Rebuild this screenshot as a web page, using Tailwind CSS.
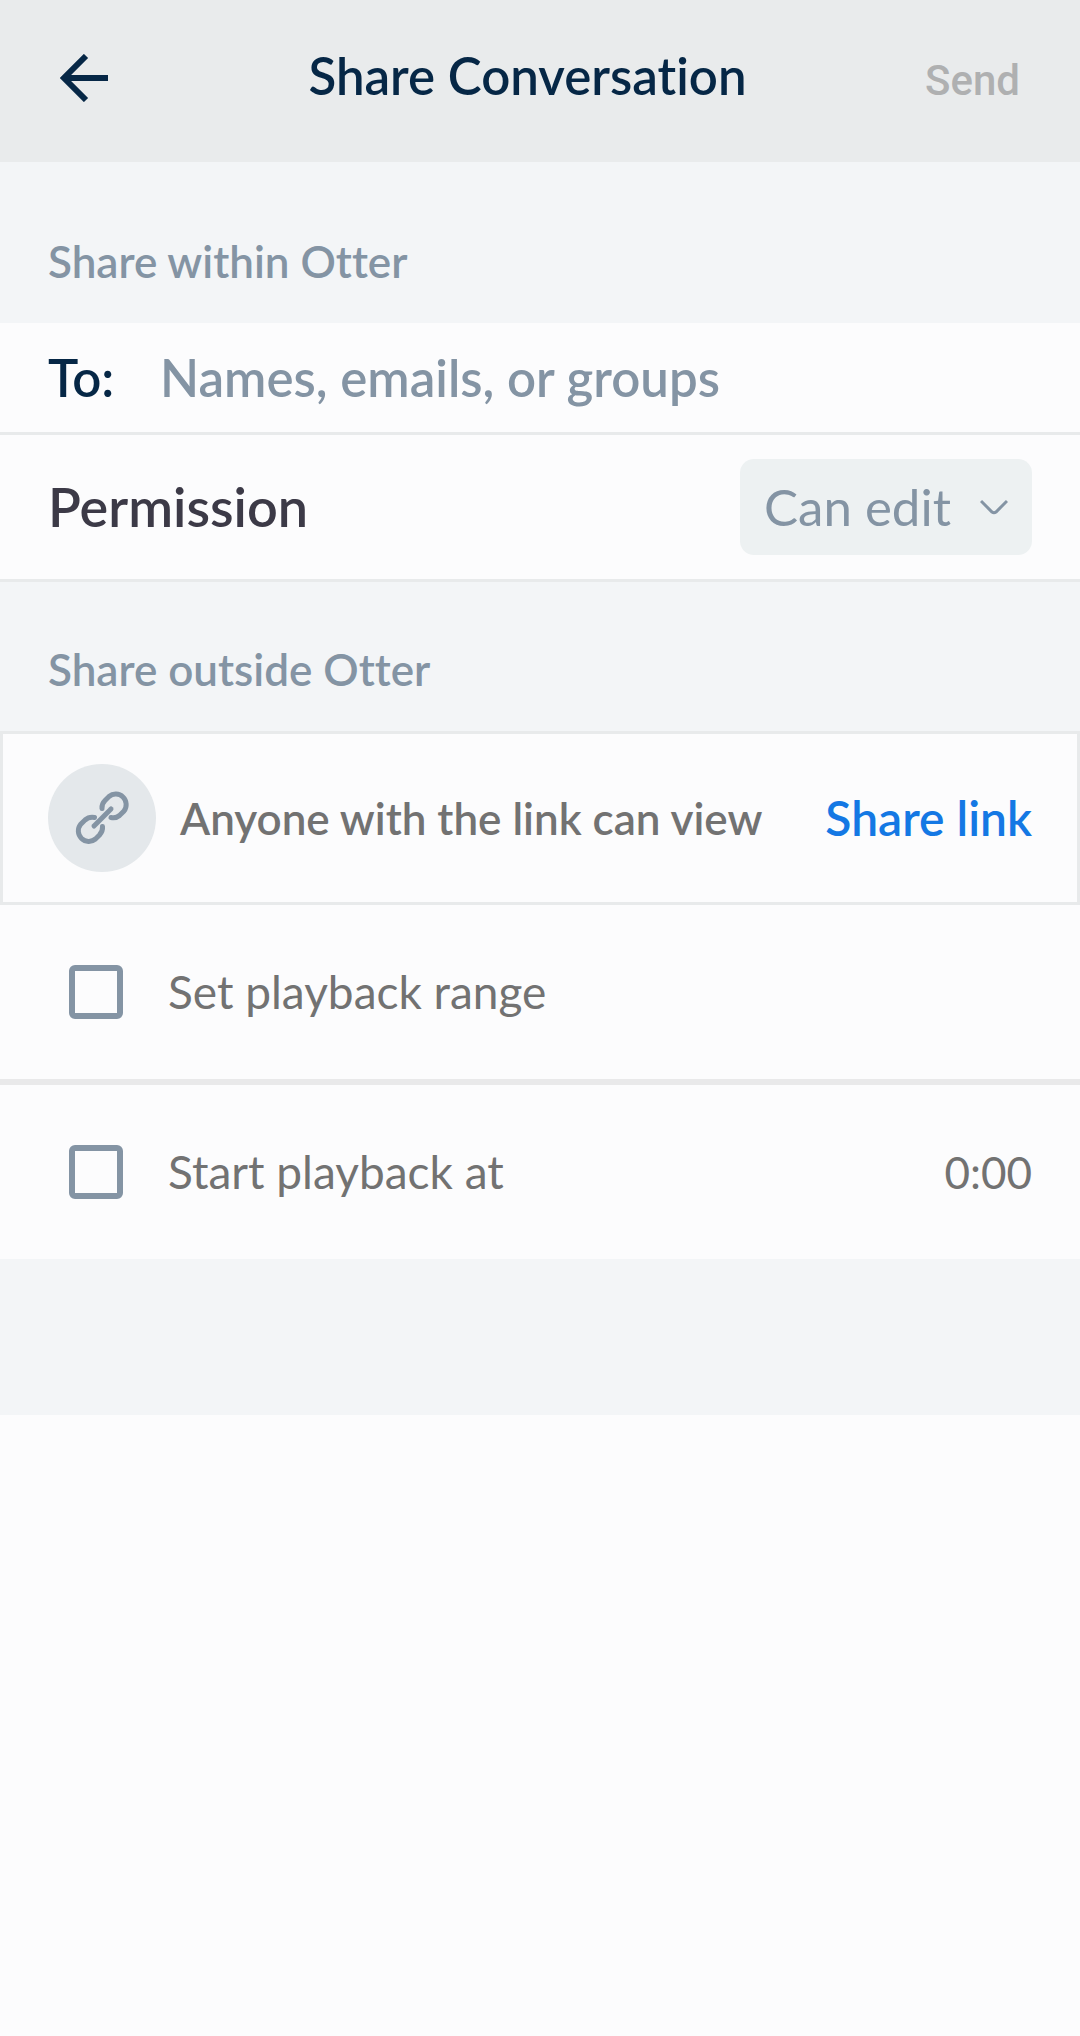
<!DOCTYPE html>
<html lang="en">
<head>
<meta charset="utf-8">
<meta name="viewport" content="width=device-width, initial-scale=1">
<title>Share Conversation</title>
<script src="https://cdn.jsdelivr.net/npm/@tailwindcss/browser@4"></script>
</head>
<body class="min-h-screen bg-[#fcfcfd] font-['Lato','Open_Sans',sans-serif] text-[#727272] [font-variant-ligatures:none]">
  <header class="flex h-[162px] items-center bg-[#e9ebec] px-[60px] pb-1.5">
    <button type="button" aria-label="Back" class="flex w-[70px] shrink-0 text-[#062746]">
      <svg class="h-12 w-12" viewBox="0 0 48 48" fill="none" stroke="currentColor" stroke-width="6" aria-hidden="true"><path d="M48 24H5M26 2 4 24l22 22"/></svg>
    </button>
    <div class="flex flex-1 items-baseline pb-1">
      <h1 class="flex-1 text-center text-[51px] leading-[60px] font-semibold text-[#062746]">Share Conversation</h1>
      <button type="button" disabled class="font-['Roboto',sans-serif] text-[42px] leading-[52px] font-medium text-[#afb0b1]">Send</button>
    </div>
  </header>

  <main>
    <section class="bg-[#f3f5f7]">
      <h2 class="px-12 pt-[73px] pb-9 text-[44px] leading-[52px] font-semibold text-[#8494a4]">Share within Otter</h2>
      <div class="flex h-28 items-center border-b-3 border-[#e8eaeb] bg-[#fcfcfd] px-12">
        <label for="to" class="w-[112px] shrink-0 text-[51px] leading-[60px] font-semibold text-[#062746]">To:</label>
        <input id="to" type="text" placeholder="Names, emails, or groups" class="min-w-0 flex-1 bg-transparent text-[51px] leading-[60px] font-semibold text-[#062746] outline-none placeholder:text-[#8494a4]">
      </div>
      <div class="flex h-[147px] items-center justify-between border-b-3 border-[#e8eaeb] bg-[#fcfcfd] px-12">
        <label for="permission" class="text-[54px] leading-[60px] font-semibold text-[#3c3a47]">Permission</label>
        <div class="relative">
          <select id="permission" class="h-24 w-[292px] appearance-none rounded-[14px] bg-[#edf1f2] pl-6 text-[51px] leading-[60px] text-[#8494a4]">
            <option>Can edit</option>
            <option>Can view</option>
          </select>
          <svg class="pointer-events-none absolute top-10 right-6 h-4 w-7" viewBox="0 0 28 16" fill="none" stroke="#8494a4" stroke-width="3" aria-hidden="true"><path d="m1 2 11 11q2 1.500 4 0L27 2"/></svg>
        </div>
      </div>
    </section>

    <section class="bg-[#f3f5f7] pb-39">
      <h2 class="px-12 pt-[61px] pb-9 text-[44px] leading-[52px] font-semibold text-[#8494a4]">Share outside Otter</h2>
      <div class="flex h-[174px] items-center border-3 border-[#e8eaeb] bg-[#fcfcfd] px-[45px]">
        <span class="flex size-[108px] shrink-0 items-center justify-center rounded-full bg-[#e4e8eb]">
          <svg class="size-[54px]" viewBox="0 0 54 54" fill="none" stroke="#8494a4" stroke-width="5" stroke-linecap="round" aria-hidden="true">
            <path d="M19 35 36 18"/>
            <path d="M27 17.500Q26.500 13 30 9.500L34 5.500A10.500 10.500 0 0 1 49 20L44.500 24.500Q41 27.500 36 26.500"/>
            <path d="M19.500 26.500Q14 25.500 10 29L5.500 33.500A10.500 10.500 0 0 0 20.500 48L24.500 44Q28 40 27.500 35.500"/>
          </svg>
        </span>
        <p class="ml-6 text-[44px] leading-[52px] font-semibold">Anyone with the link can view</p>
        <button type="button" class="ml-auto text-[48px] leading-[56px] font-semibold text-[#1478e4]">Share link</button>
      </div>
      <div class="flex h-[180px] items-center border-b-6 border-[#e9e9ea] bg-[#fcfcfd] pr-12 pl-[69px]">
        <input id="range" type="checkbox" class="size-[54px] shrink-0 appearance-none rounded-md border-6 border-[#8494a4]">
        <label for="range" class="pl-[45px] text-[46px] leading-[52px]">Set playback range</label>
      </div>
      <div class="flex h-[174px] items-center bg-[#fcfcfd] pr-12 pl-[69px]">
        <input id="start" type="checkbox" class="size-[54px] shrink-0 appearance-none rounded-md border-6 border-[#8494a4]">
        <label for="start" class="pl-[45px] text-[46px] leading-[52px]">Start playback at</label>
        <span class="ml-auto text-[44px] leading-[52px]">0:00</span>
      </div>
    </section>
  </main>
</body>
</html>
